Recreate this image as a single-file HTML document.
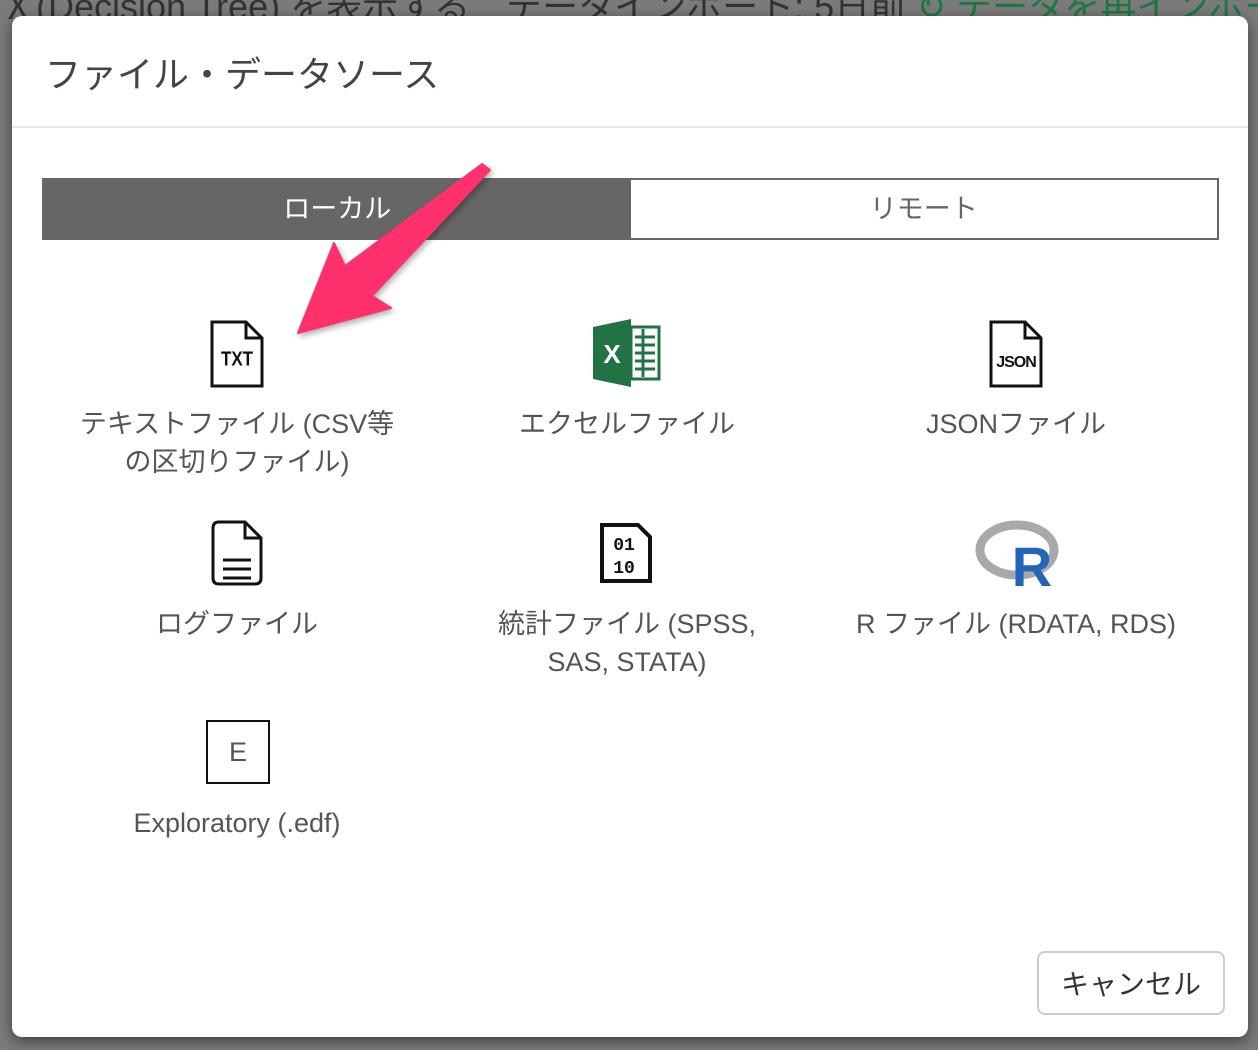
<!DOCTYPE html>
<html><head><meta charset="utf-8"><style>
body{margin:0;width:1258px;height:1050px;background:#7b7b7b;position:relative;overflow:hidden;font-family:"Liberation Sans","Noto Sans CJK JP",sans-serif;}
.bgtext{position:absolute;top:-22px;left:0;font-size:36px;color:#333;white-space:nowrap;}
.modal{position:absolute;left:12px;top:16px;width:1236px;height:1021px;background:#fff;border-radius:10px;box-shadow:0 4px 14px rgba(0,0,0,.5);}
.title{position:absolute;left:33px;top:30px;font-size:36px;color:#444;}
.hr{position:absolute;left:0;right:0;top:110px;height:2px;background:#e5e5e5;}
.tabs{position:absolute;left:30px;top:162px;width:1173px;height:58px;border:2px solid #666;display:flex;}
.tab{flex:1;display:flex;align-items:center;justify-content:center;font-size:27px;color:#666;padding-bottom:5px;}
.tab.on{background:#666;color:#fff;}
.item{position:absolute;width:360px;text-align:center;font-size:27px;line-height:38px;color:#555;}
.ic{position:absolute;}
.btn{position:absolute;left:1025px;top:935px;width:188px;height:64px;border:2px solid #ccc;border-radius:8px;font-size:28px;color:#333;display:flex;align-items:center;justify-content:center;box-sizing:border-box;}
</style></head><body>
<div class="bgtext">Ⅹ(Decision Tree) を表示する　データインポート: 5日前 <span style="color:#1a7a40">↻ データを再インポート</span></div>
<div class="modal">
<div class="title">ファイル・データソース</div>
<div class="hr"></div>
<div class="tabs"><div class="tab on">ローカル</div><div class="tab">リモート</div></div>

<svg class="ic" style="left:198px;top:304px" width="54" height="68" viewBox="0 0 54 68"><path d="M2 2H36L52 18V66H2Z M36 2V18H52" fill="#fff" stroke="#111" stroke-width="3"/><text x="27" y="46" font-size="17" text-anchor="middle" font-family="Liberation Sans Narrow,Liberation Sans" font-weight="bold" fill="#111" transform="scale(1,1.2) translate(0,-8)">TXT</text></svg>
<div class="item" style="left:45px;top:389px">テキストファイル (CSV等<br>の区切りファイル)</div>

<svg class="ic" style="left:581px;top:303px" width="68" height="68" viewBox="0 0 68 68"><path d="M0 8L38 0V68L0 60Z" fill="#217346"/><rect x="38" y="8" width="28" height="52" fill="#fff" stroke="#217346" stroke-width="3"/><path d="M42 18H62M42 26H62M42 34H62M42 42H62M42 50H62M50 10V58" stroke="#217346" stroke-width="3"/><text x="19" y="44" font-size="26" text-anchor="middle" font-weight="bold" fill="#fff">X</text></svg>
<div class="item" style="left:435px;top:389px">エクセルファイル</div>

<svg class="ic" style="left:977px;top:304px" width="54" height="68" viewBox="0 0 54 68"><path d="M2 2H36L52 18V66H2Z M36 2V18H52" fill="#fff" stroke="#111" stroke-width="3"/><text x="27" y="47" font-size="16" text-anchor="middle" font-weight="bold" fill="#111" letter-spacing="-1">JSON</text></svg>
<div class="item" style="left:824px;top:389px">JSONファイル</div>

<svg class="ic" style="left:199px;top:504px" width="52" height="66" viewBox="0 0 52 66"><path d="M6 2H34L50 18V58Q50 64 44 64H8Q2 64 2 58V8Q2 2 8 2Z M34 2V18H50" fill="#fff" stroke="#111" stroke-width="3"/><path d="M12 40H40M12 49H40M12 58H40" stroke="#111" stroke-width="3"/></svg>
<div class="item" style="left:45px;top:589px">ログファイル</div>

<svg class="ic" style="left:588px;top:507px" width="52" height="60" viewBox="0 0 52 60"><path d="M2 2H38L50 14V58H2Z" fill="#fff" stroke="#111" stroke-width="4"/><text x="24" y="27" font-size="18" text-anchor="middle" font-family="Liberation Mono" font-weight="bold" fill="#111">01</text><text x="24" y="50" font-size="18" text-anchor="middle" font-family="Liberation Mono" font-weight="bold" fill="#111">10</text></svg>
<div class="item" style="left:435px;top:589px">統計ファイル (SPSS,<br>SAS, STATA)</div>

<svg class="ic" style="left:961px;top:502px" width="90" height="72" viewBox="0 0 90 72"><ellipse cx="44" cy="32" rx="37" ry="25" fill="none" stroke="#a8a9ad" stroke-width="9"/><text x="59" y="68" font-size="56" text-anchor="middle" font-weight="bold" fill="#2166b8">R</text></svg>
<div class="item" style="left:824px;top:589px">R ファイル (RDATA, RDS)</div>

<div class="ic" style="left:194px;top:704px;width:60px;height:60px;border:2px solid #111;font-size:27px;color:#555;display:flex;align-items:center;justify-content:center">E</div>
<div class="item" style="left:45px;top:788px">Exploratory (.edf)</div>

<div class="btn">キャンセル</div>
</div>
<svg style="position:absolute;left:0;top:0" width="1258" height="1050"><polygon points="482,164 490,170 372,296 391,308 298,333 334,243 345,266" fill="#fe316c" style="filter:drop-shadow(2px 3px 3px rgba(0,0,0,.3))" stroke="#fe316c" stroke-width="2" stroke-linejoin="round"/></svg>
</body></html>
